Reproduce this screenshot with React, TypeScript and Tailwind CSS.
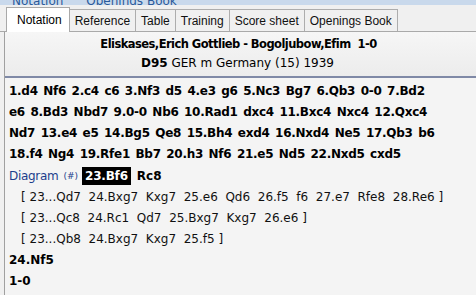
const tabs = ["Notation", "Reference", "Table", "Training", "Score sheet", "Openings Book"];

const mainLines = [
  "1.d4 Nf6 2.c4 c6 3.Nf3 d5 4.e3 g6 5.Nc3 Bg7 6.Qb3 0-0 7.Bd2",
  "e6 8.Bd3 Nbd7 9.0-0 Nb6 10.Rad1 dxc4 11.Bxc4 Nxc4 12.Qxc4",
  "Nd7 13.e4 e5 14.Bg5 Qe8 15.Bh4 exd4 16.Nxd4 Ne5 17.Qb3 b6",
  "18.f4 Ng4 19.Rfe1 Bb7 20.h3 Nf6 21.e5 Nd5 22.Nxd5 cxd5",
];

const variations = [
  "[ 23...Qd7  24.Bxg7  Kxg7  25.e6  Qd6  26.f5  f6  27.e7  Rfe8  28.Re6 ]",
  "[ 23...Qc8  24.Rc1  Qd7  25.Bxg7  Kxg7  26.e6 ]",
  "[ 23...Qb8  24.Bxg7  Kxg7  25.f5 ]",
];

export default function App() {
  return (
    <div
      className="w-[476px] h-[295px] overflow-hidden bg-[#f4f4f4] text-black flex flex-col"
      style={{ fontFamily: "'DejaVu Sans', Verdana, sans-serif" }}
    >
      {/* window strip, mostly cut off */}
      <div className="h-[5px] bg-[#c9d9ec] overflow-hidden relative">
        <div className="absolute left-[12px] -top-[8px] text-[12px] text-[#2a5a9a] whitespace-pre">
          Notation      Openings Book
        </div>
      </div>

      {/* tabs */}
      <div
        className="h-[27px] flex items-end pl-[6px] bg-[#f0f0f0] border-b border-[#a9a9a9]"
        style={{ fontFamily: "'Liberation Sans', Arial, sans-serif" }}
      >
        {tabs.map((t, i) =>
          i === 0 ? (
            <div
              key={t}
              className="h-[25px] -mb-px pl-[10px] pr-[7px] flex items-center bg-white border border-b-0 border-[#a9a9a9] text-[12px] z-10"
            >
              {t}
            </div>
          ) : (
            <div
              key={t}
              className="h-[22px] px-[5px] flex items-center bg-[#f0f0f0] border border-l-0 border-b-0 border-[#adadad] text-[12px] text-[#111]"
            >
              {t}
            </div>
          )
        )}
      </div>

      <div className="flex-1 flex">
        <div className="w-[5px] bg-[#f0f0f0] border-r border-[#a0a0a0]" />
        <div className="flex-1 flex flex-col">
          {/* game header */}
          <div className="h-[46px] bg-gradient-to-b from-[#f6f6f6] to-[#ececec] border-b-2 border-[#7f89a6] flex flex-col items-center justify-center text-[12px] leading-[19px]">
            <div className="font-bold text-[11.5px] tracking-[-0.55px] pr-[4px]">
              Eliskases,Erich Gottlieb - Bogoljubow,Efim&nbsp; 1-0
            </div>
            <div className="pr-[6px]">
              <span className="font-bold">D95</span> GER m Germany (15) 1939
            </div>
          </div>

          {/* notation */}
          <div className="pl-[4px] pt-[3px] text-[12px] leading-[21px] whitespace-pre">
            {mainLines.map((l) => (
              <div key={l} className="font-bold tracking-[-0.27px] [word-spacing:1.6px]">
                {l}
              </div>
            ))}
            <div className="flex items-center h-[22px]">
              <span className="text-[#1c3e8c] tracking-[-0.3px]">Diagram</span>
              <span className="ml-[5px] text-[#1c3e8c] text-[9px]">(#)</span>
              <span className="ml-[4px] font-bold bg-black text-white px-[3px] leading-[18px] tracking-[-0.2px]">
                23.Bf6
              </span>
              <span className="ml-[6px] font-bold">Rc8</span>
            </div>
            {variations.map((v) => (
              <div key={v} className="pl-[12px] text-[#111]">
                {v}
              </div>
            ))}
            <div className="font-bold">24.Nf5</div>
            <div className="font-bold">1-0</div>
          </div>
        </div>
      </div>
    </div>
  );
}
